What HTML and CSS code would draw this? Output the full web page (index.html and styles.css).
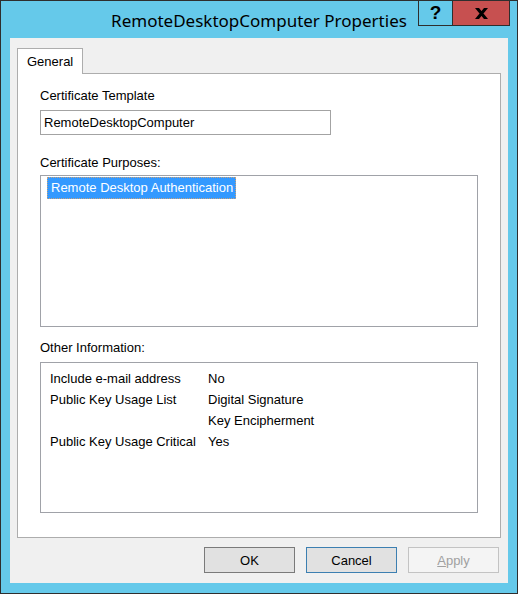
FILE: index.html
```html
<!DOCTYPE html>
<html>
<head>
<meta charset="utf-8">
<link rel="stylesheet" href="styles.css">
</head>
<body>
<div class="window">
  <div class="titlebar">
    <div class="spacer"></div>
    <div class="title">RemoteDesktopComputer Properties</div>
    <div class="caption">
      <div class="cap-btn help">?</div>
      <div class="cap-btn close">
        <svg width="13" height="11" viewBox="0 0 13 11"><path d="M0 0H4L13 11H9Z M9 0H13L4 11H0Z" fill="#000"/></svg>
      </div>
    </div>
  </div>
  <div class="client">
    <div class="tabs"><div class="tab">General</div></div>
    <div class="panel">
      <div class="label">Certificate Template</div>
      <div class="textbox">RemoteDesktopComputer</div>
      <div class="label l2">Certificate Purposes:</div>
      <div class="listbox purposes">
        <div class="item selected">Remote Desktop Authentication</div>
      </div>
      <div class="label l3">Other Information:</div>
      <div class="listbox info">
        <div class="row"><span class="k">Include e-mail address</span><span class="v">No</span></div>
        <div class="row"><span class="k">Public Key Usage List</span><span class="v">Digital Signature</span></div>
        <div class="row"><span class="k"></span><span class="v">Key Encipherment</span></div>
        <div class="row"><span class="k">Public Key Usage Critical</span><span class="v">Yes</span></div>
      </div>
    </div>
    <div class="buttons">
      <div class="btn ok">OK</div>
      <div class="btn cancel">Cancel</div>
      <div class="btn disabled"><u>A</u>pply</div>
    </div>
  </div>
</div>
</body>
</html>
```

FILE: styles.css
```css
* { box-sizing: border-box; }
html, body { margin: 0; padding: 0; }
body { width: 518px; height: 594px; overflow: hidden; background: #65c9ea; }

.window {
  width: 518px;
  height: 594px;
  border: 1px solid #2e2e2e;
  background: #65c9ea;
  display: flex;
  flex-direction: column;
  padding: 0 9px 10px 9px;
}

.titlebar {
  height: 37px;
  display: grid;
  grid-template-columns: 1fr auto 1fr;
  align-items: start;
  margin: 0 -9px;
}
.title {
  font-family: "Noto Sans", sans-serif;
  font-size: 17px;
  line-height: 20px;
  padding-top: 10px;
  color: #000;
  white-space: nowrap;
}
.caption {
  justify-self: end;
  margin-right: 7px;
  display: flex;
  border: 1px solid #2e2e2e;
  border-top: none;
  height: 25px;
}
.cap-btn {
  height: 24px;
  display: flex;
  align-items: center;
  justify-content: center;
}
.help {
  width: 34px;
  border-right: 1px solid #2e2e2e;
  font-family: "Liberation Sans", sans-serif;
  font-weight: bold;
  font-size: 19px;
  color: #000;
  padding-bottom: 1px;
}
.close {
  width: 56px;
  background: #c75050;
}

.client {
  flex: 1;
  background: #f0f0f0;
  padding: 10px 7px 10px 7px;
  display: flex;
  flex-direction: column;
  font-family: "Liberation Sans", Arial, sans-serif;
  font-size: 13px;
  color: #000;
}

.tabs { display: flex; height: 25px; }
.tab {
  width: 66px;
  height: 26px;
  border: 1px solid #adadad;
  border-bottom: none;
  background: #fff;
  padding: 5px 0 0 9px;
  line-height: 15px;
  position: relative;
  z-index: 1;
}

.panel {
  height: 465px;
  border: 1px solid #adadad;
  background: #fff;
  padding: 14px 22px 0 22px;
  display: flex;
  flex-direction: column;
}
.label { line-height: 15px; height: 15px; }
.textbox {
  margin-top: 7px;
  width: 291px;
  height: 25px;
  border: 1px solid #a3a3a3;
  padding-left: 3px;
  line-height: 23px;
}
.l2 { margin-top: 20px; }
.l3 { margin-top: 13px; }
.listbox {
  width: 438px;
  border: 1px solid #a0a2a8;
  background: #fff;
}
.purposes {
  margin-top: 5px;
  height: 152px;
  padding: 1px 0 0 6px;
}
.item {
  display: inline-block;
  height: 22px;
  line-height: 20px;
  padding: 0 2px 0 3px;
}
.item.selected {
  background: #3399ff;
  color: #fff;
  border: 1px dotted #c9a27a;
}
.info {
  margin-top: 7px;
  height: 151px;
  padding: 5px 0 0 9px;
}
.row { display: flex; line-height: 21px; height: 21px; }
.k { width: 158px; }

.buttons {
  margin-top: 9px;
  display: flex;
  justify-content: flex-end;
  gap: 11px;
  padding-right: 2px;
}
.btn {
  width: 91px;
  height: 26px;
  border: 1px solid #7a7a7a;
  background: #e1e1e1;
  text-align: center;
  line-height: 25px;
}
.btn.cancel { border-color: #3c7fb1; }
.btn.disabled {
  border-color: #c3c3c3;
  background: #f4f4f4;
  color: #a0a0a0;
}
.btn u { text-decoration: underline; }
```
